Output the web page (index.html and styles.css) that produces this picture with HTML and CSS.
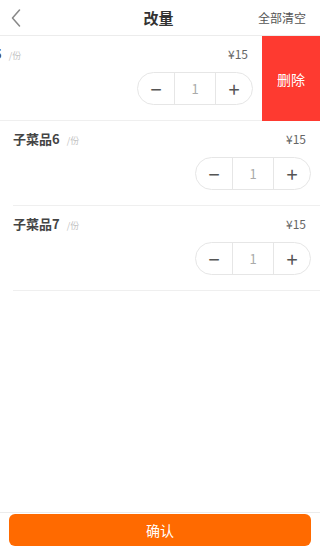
FILE: index.html
```html
<!DOCTYPE html>
<html lang="zh-CN">
<head>
<meta charset="utf-8">
<title>改量</title>
<link rel="stylesheet" href="styles.css">
</head>
<body>
<div class="page">
  <header class="topbar">
    <span class="back">
      <svg width="10" height="18" viewBox="0 0 10 18"><path d="M8.5 1 L1.5 9 L8.5 17" fill="none" stroke="#888" stroke-width="1.5" stroke-linecap="round" stroke-linejoin="round"/></svg>
    </span>
    <h1 class="title">改量</h1>
    <span class="clear">全部清空</span>
  </header>

  <div class="list">
    <div class="row">
      <div class="track swiped">
        <div class="item">
          <div class="item-top">
            <div class="name">子菜品5 <span class="unit">/份</span></div>
            <div class="price">¥15</div>
          </div>
          <div class="item-bottom">
            <div class="stepper">
              <span class="btn">−</span><span class="qty">1</span><span class="btn">+</span>
            </div>
          </div>
        </div>
        <div class="delete">删除</div>
      </div>
    </div>

    <div class="row">
      <div class="track">
        <div class="item">
          <div class="item-top">
            <div class="name">子菜品6 <span class="unit">/份</span></div>
            <div class="price">¥15</div>
          </div>
          <div class="item-bottom">
            <div class="stepper">
              <span class="btn">−</span><span class="qty">1</span><span class="btn">+</span>
            </div>
          </div>
        </div>
        <div class="delete">删除</div>
      </div>
    </div>

    <div class="row">
      <div class="track">
        <div class="item">
          <div class="item-top">
            <div class="name">子菜品7 <span class="unit">/份</span></div>
            <div class="price">¥15</div>
          </div>
          <div class="item-bottom">
            <div class="stepper">
              <span class="btn">−</span><span class="qty">1</span><span class="btn">+</span>
            </div>
          </div>
        </div>
        <div class="delete">删除</div>
      </div>
    </div>
  </div>

  <footer class="footer">
    <button class="confirm">确认</button>
  </footer>
</div>
</body>
</html>
```

FILE: styles.css
```css
* { box-sizing: border-box; }
html, body { margin: 0; padding: 0; }
body {
  font-family: "Noto Sans CJK SC", "Noto Sans", sans-serif;
  background: #fff;
  color: #333;
}
.page {
  width: 320px;
  height: 553px;
  display: flex;
  flex-direction: column;
  overflow: hidden;
}
.topbar {
  height: 36px;
  border-bottom: 1px solid #ececec;
  display: grid;
  grid-template-columns: 80px 1fr 80px;
  align-items: center;
  padding: 0 14px 0 11px;
  flex-shrink: 0;
}
.back { display: flex; align-items: center; }
.title {
  margin: 0;
  text-align: center;
  font-size: 15px;
  font-weight: 700;
  color: #333;
  line-height: 1;
}
.clear {
  text-align: right;
  font-size: 12px;
  color: #555;
}
.list { flex: 1; }
.row { overflow: hidden; }
.track {
  display: flex;
  width: 378px;
}
.track.swiped { transform: translateX(-58px); }
.item {
  width: 307px;
  flex-shrink: 0;
  margin-left: 13px;
  padding: 8px 9px 13px 0;
  border-bottom: 1px solid #efefef;
  height: 85px;
}
.item-top {
  display: flex;
  justify-content: space-between;
  align-items: center;
  height: 18px;
}
.name {
  font-size: 13px;
  font-weight: 700;
  color: #444;
}
.unit {
  font-size: 9px;
  font-weight: 400;
  color: #c2c2c2;
  margin-left: 4px;
}
.price {
  font-size: 12px;
  color: #666;
  margin-right: 5px;
}
.item-bottom {
  display: flex;
  justify-content: flex-end;
  margin-top: 10px;
}
.stepper {
  display: flex;
  height: 33px;
  border: 1px solid #e6e6e6;
  border-radius: 17px;
  overflow: hidden;
}
.stepper .btn {
  width: 36px;
  display: flex;
  align-items: center;
  justify-content: center;
  font-size: 20px;
  color: #555;
  line-height: 1;
}
.stepper .qty {
  width: 42px;
  display: flex;
  align-items: center;
  justify-content: center;
  border-left: 1px solid #e6e6e6;
  border-right: 1px solid #e6e6e6;
  font-size: 13px;
  color: #aaa;
}
.delete {
  width: 58px;
  flex-shrink: 0;
  background: #fe3a30;
  color: #fff;
  font-size: 14px;
  display: flex;
  align-items: center;
  justify-content: center;
  height: 85px;
}
.footer {
  flex-shrink: 0;
  border-top: 1px solid #ececec;
  padding: 1px 9px 7px;
}
.confirm {
  display: block;
  width: 100%;
  height: 32px;
  border: 0;
  border-radius: 6px;
  background: #ff6a00;
  color: #fff;
  font-family: inherit;
  font-size: 14px;
  padding: 0;
}
```
